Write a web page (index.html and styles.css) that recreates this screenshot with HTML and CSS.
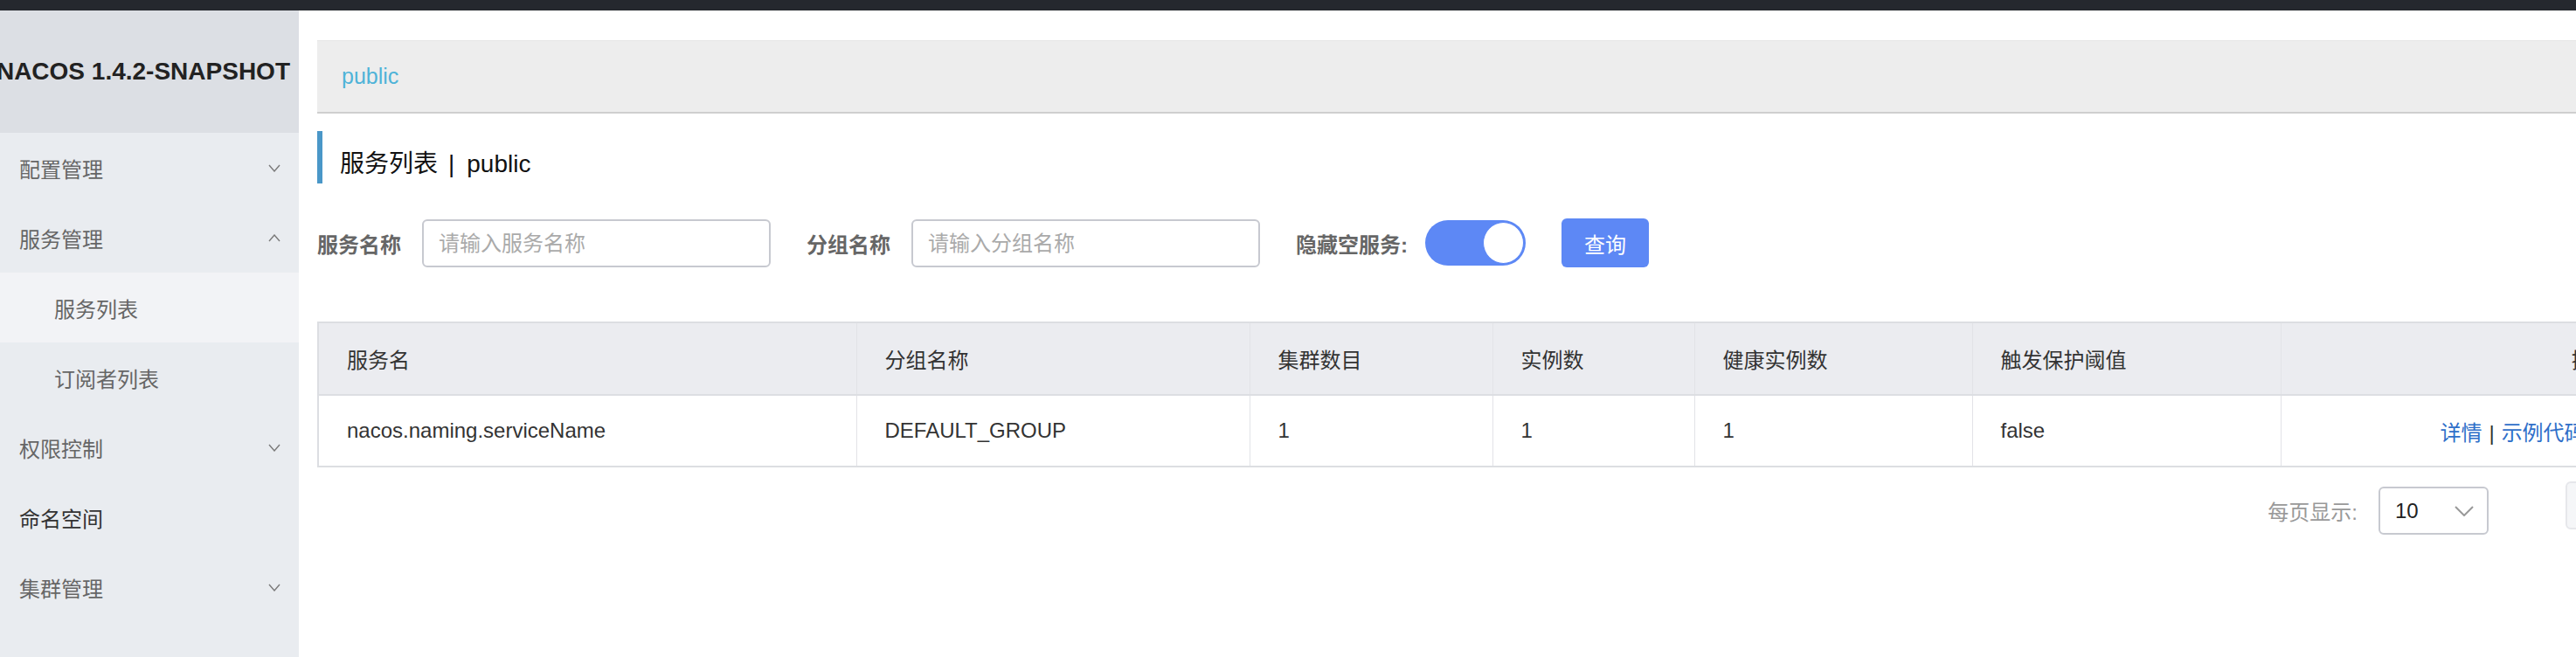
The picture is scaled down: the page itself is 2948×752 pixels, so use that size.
FILE: index.html
```html
<!DOCTYPE html>
<html lang="zh-CN">
<head>
<meta charset="utf-8">
<title>Nacos</title>
<link rel="stylesheet" href="styles.css">
</head>
<body>
<div class="topbar"></div>
<div class="layout">
  <aside class="sidebar">
    <div class="logo"><span>NACOS 1.4.2-SNAPSHOT</span></div>
    <ul class="menu">
      <li class="item"><span>配置管理</span><svg class="chev" width="14" height="9" viewBox="0 0 14 9"><polyline points="1,1 7,8 13,1"/></svg></li>
      <li class="item"><span>服务管理</span><svg class="chev" width="14" height="9" viewBox="0 0 14 9"><polyline points="1,8 7,1 13,8"/></svg></li>
      <li class="item sub active"><span>服务列表</span></li>
      <li class="item sub"><span>订阅者列表</span></li>
      <li class="item"><span>权限控制</span><svg class="chev" width="14" height="9" viewBox="0 0 14 9"><polyline points="1,1 7,8 13,1"/></svg></li>
      <li class="item dark"><span>命名空间</span></li>
      <li class="item"><span>集群管理</span><svg class="chev" width="14" height="9" viewBox="0 0 14 9"><polyline points="1,1 7,8 13,1"/></svg></li>
    </ul>
  </aside>
  <main class="main">
    <div class="breadcrumb">public</div>
    <div class="page-title">服务列表<span class="sep">|</span>public</div>
    <div class="filters">
      <label class="flabel">服务名称</label>
      <div class="input">请输入服务名称</div>
      <label class="flabel gap">分组名称</label>
      <div class="input">请输入分组名称</div>
      <label class="flabel gap tight">隐藏空服务:</label>
      <div class="switch"><div class="knob"></div></div>
      <button class="btn">查询</button>
    </div>
    <table class="grid">
      <colgroup>
        <col class="c1"><col class="c2"><col class="c3"><col class="c4"><col class="c5"><col class="c6"><col class="c7">
      </colgroup>
      <thead>
        <tr>
          <th>服务名</th><th>分组名称</th><th>集群数目</th><th>实例数</th><th>健康实例数</th><th>触发保护阈值</th><th class="center">操作</th>
        </tr>
      </thead>
      <tbody>
        <tr>
          <td>nacos.naming.serviceName</td><td>DEFAULT_GROUP</td><td>1</td><td>1</td><td>1</td><td>false</td>
          <td class="center"><a class="link">详情</a><span class="bar">|</span><a class="link">示例代码</a><span class="bar">|</span><a class="link">编辑</a><span class="bar">|</span><a class="link">删除</a></td>
        </tr>
      </tbody>
    </table>
    <div class="pager">
      <span class="pager-label">每页显示:</span>
      <div class="select"><span>10</span><svg width="22" height="12" viewBox="0 0 22 12"><polyline points="1,1 11,11 21,1"/></svg></div>
      <div class="pbtn wide">上一页</div>
      <div class="pbtn">1</div>
      <div class="pbtn wide">下一页</div>
    </div>
  </main>
</div>
</body>
</html>
```

FILE: styles.css
```css
* { box-sizing: border-box; }
html, body { margin: 0; padding: 0; }
body {
  width: 2948px;
  height: 752px;
  overflow: hidden;
  background: #fff;
  font-family: "Liberation Sans", "Noto Sans CJK SC", sans-serif;
  color: #333;
}
.topbar { height: 12px; background: #25282e; }
.layout { display: flex; height: 740px; }
.sidebar { width: 342px; flex: none; background: #e9ecf0; }
.logo {
  height: 140px;
  background: #dcdfe4;
  display: flex;
  align-items: center;
  justify-content: flex-end;
  padding-right: 10px;
  overflow: hidden;
  white-space: nowrap;
}
.logo span { font-size: 28px; font-weight: bold; color: #222; flex: none; }
.menu { list-style: none; margin: 0; padding: 0; }
.item {
  height: 80px;
  display: flex;
  align-items: center;
  justify-content: space-between;
  padding: 0 21px 0 22px;
  font-size: 24px;
  color: #666;
}
.item.sub { padding-left: 62px; }
.item.active { background: #f2f3f6; }
.item.dark { color: #333; }
.chev polyline { fill: none; stroke: #7a7a7a; stroke-width: 1.4; }
.main { flex: 1; min-width: 0; padding: 34px 0 0 21px; }
.breadcrumb {
  height: 84px;
  background: #ededed;
  border-top: 1px solid #e6e6e6;
  border-bottom: 2px solid #cfcfcf;
  padding-left: 28px;
  font-size: 25px;
  color: #4fb3d8;
  line-height: 80px;
  margin-right: -40px;
}
.page-title {
  margin-top: 20px;
  height: 60px;
  border-left: 6px solid #4a97c8;
  padding: 14px 0 0 20px;
  font-size: 28px;
  line-height: 48px;
  color: #111;
}
.sep { margin: 0 14px 0 12px; }
.filters {
  margin-top: 40px;
  height: 56px;
  display: flex;
  align-items: center;
}
.flabel { font-size: 24px; font-weight: bold; color: #666; margin-right: 24px; white-space: nowrap; }
.flabel.gap { margin-left: 41px; }
.flabel.tight { margin-right: 20px; }
.input {
  width: 399px;
  height: 55px;
  border: 2px solid #c7c9d0;
  border-radius: 6px;
  padding-left: 17px;
  font-size: 24px;
  line-height: 51px;
  color: #aaa;
}
.switch {
  width: 115px;
  height: 52px;
  border-radius: 26px;
  background: #5d88f5;
  display: flex;
  justify-content: flex-end;
  align-items: center;
  padding-right: 2px;
}
.knob {
  width: 47px;
  height: 48px;
  border-radius: 50%;
  background: #fff;
  border: 1px solid #5d88f5;
}
.btn {
  margin-left: 41px;
  width: 100px;
  height: 56px;
  border: none;
  border-radius: 6px;
  background: #5d88f5;
  color: #fff;
  font-family: inherit;
  font-size: 24px;
  padding: 0;
}
.grid {
  margin-top: 62px;
  width: 2918px;
  table-layout: fixed;
  border-collapse: collapse;
  border: 2px solid #dcdee2;
  font-size: 24px;
}
.c1 { width: 616px; } .c2 { width: 450px; } .c3 { width: 278px; } .c4 { width: 231px; }
.c5 { width: 318px; } .c6 { width: 353px; } .c7 { width: 672px; }
.grid th, .grid td {
  text-align: left;
  padding: 0 0 0 32px;
  border-right: 1px solid #e2e3e7;
  color: #333;
  white-space: nowrap;
  overflow: hidden;
}
.grid th { height: 83px; background: #ebecf0; font-weight: normal; border-bottom: 2px solid #dcdee2; }
.grid td { height: 82px; }
.grid td.center { text-align: center; padding: 0; }
.grid th.center { text-align: center; padding: 0 0 0 42px; }
.link { color: #2f6fc9; }
.bar { margin: 0 8px; color: #333; }
.pager {
  margin-top: 19px;
  width: 2960px;
  display: flex;
  justify-content: flex-end;
  align-items: center;
  height: 61px;
}
.pager-label { font-size: 24px; color: #999; margin-right: 24px; }
.select {
  width: 126px;
  height: 55px;
  border: 2px solid #c7c9d0;
  border-radius: 6px;
  display: flex;
  align-items: center;
  justify-content: space-between;
  padding: 0 15px 0 17px;
  font-size: 24px;
  color: #222;
  margin-right: 76px;
}
.select polyline { fill: none; stroke: #999; stroke-width: 2; }
.pbtn {
  width: 63px;
  height: 55px;
  margin-bottom: 12px;
  border: 2px solid #e6e7eb;
  border-radius: 6px;
  background: #f5f6f8;
  font-size: 24px;
  color: #ccc;
  display: flex;
  align-items: center;
  justify-content: center;
  margin-left: 12px;
}
.pbtn.wide { width: 150px; }
.pbtn:first-of-type { margin-left: 0; }
```
